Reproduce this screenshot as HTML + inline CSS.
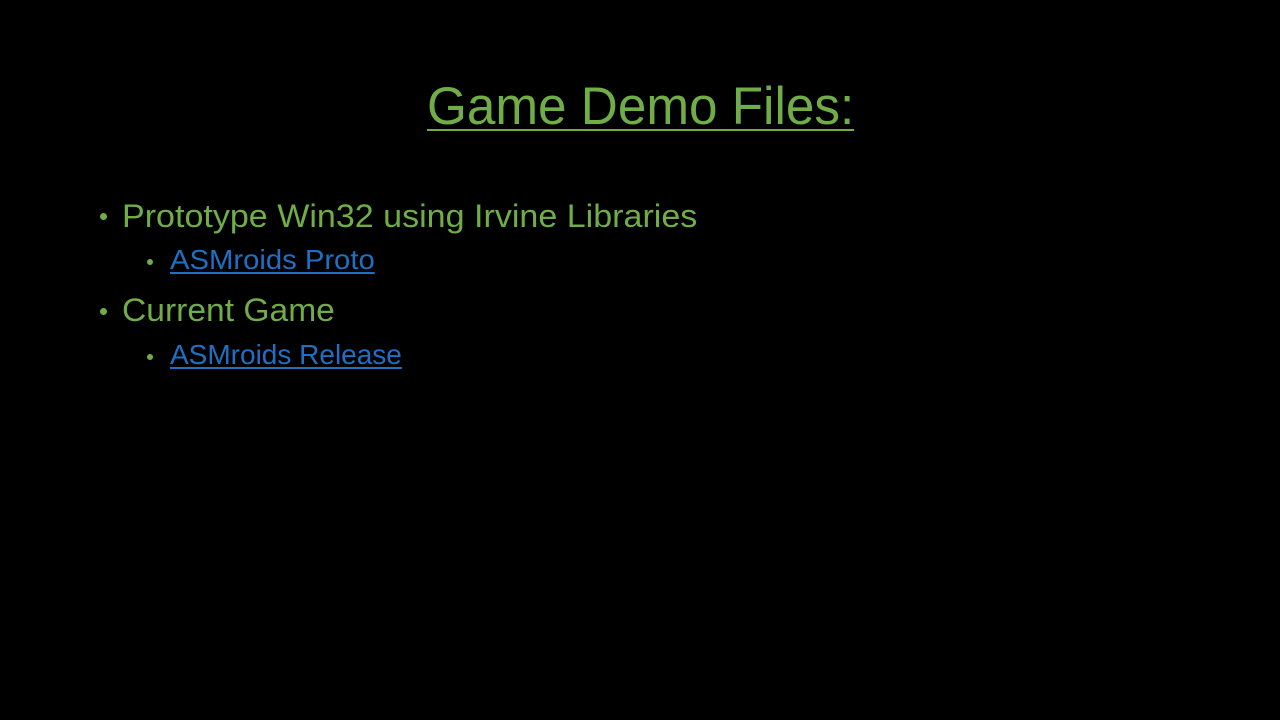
<!DOCTYPE html>
<html><head><style>
body{margin:0;width:1280px;height:720px;background:#000;overflow:hidden;font-family:"Liberation Sans",sans-serif;}
.t{position:absolute;white-space:nowrap;line-height:1;transform-origin:left top;}
.g{color:#70ad47}
.b{color:#1f6fc5}
.b span{text-decoration:underline;text-decoration-thickness:2px;text-underline-offset:3px}
.dot{position:absolute;border-radius:50%;background:#70ad47}
</style></head><body>
<div class="t g" style="left:427px;top:80px;font-size:53px;text-decoration:underline;text-decoration-thickness:2px;text-underline-offset:5px;font-weight:300;transform:scaleX(0.967)">Game Demo Files:</div>
<div class="dot" style="left:100px;top:213px;width:7px;height:7px"></div>
<div class="t g" style="left:122px;top:200px;font-size:32px;transform:scaleX(1.064)">Prototype Win32 using Irvine Libraries</div>
<div class="dot" style="left:147px;top:259px;width:6px;height:6px"></div>
<div class="t b" style="left:170px;top:246px;font-size:28px;transform:scaleX(1.044)"><span>ASMroids Proto</span></div>
<div class="dot" style="left:100px;top:308px;width:7px;height:7px"></div>
<div class="t g" style="left:122px;top:294px;font-size:32px;transform:scaleX(1.05)">Current Game</div>
<div class="dot" style="left:147px;top:354px;width:6px;height:6px"></div>
<div class="t b" style="left:170px;top:341px;font-size:28px;transform:scaleX(1.0)"><span>ASMroids Release</span></div>
</body></html>
